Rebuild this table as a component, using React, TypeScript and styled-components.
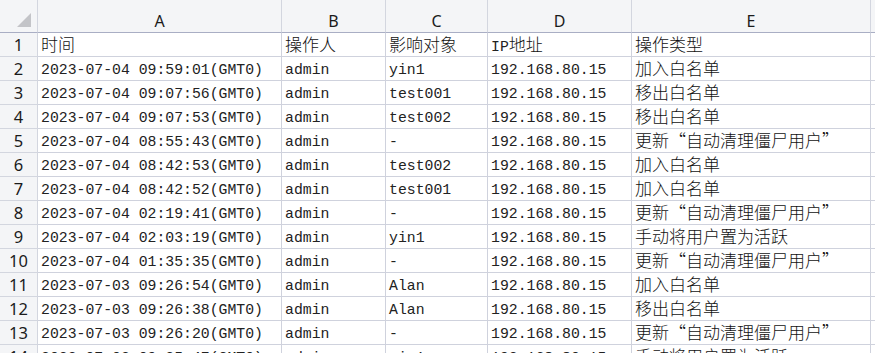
import React from 'react';
import styled, { createGlobalStyle } from 'styled-components';

const GlobalStyle = createGlobalStyle`
  html, body {
    margin: 0;
    padding: 0;
    background: #ffffff;
    overflow: hidden;
  }
`;

const COLS = [38, 244, 104, 102, 144, 239, 40];
const LETTERS = ['A', 'B', 'C', 'D', 'E', ''];

const Sheet = styled.div`
  display: grid;
  grid-template-columns: ${COLS.map((w) => `${w}px`).join(' ')};
  grid-template-rows: 33px;
  grid-auto-rows: 24px;
  width: 875px;
  height: 353px;
  overflow: hidden;
  background: #ffffff;
`;

const Corner = styled.div`
  position: relative;
  background: #f4f5f7;
  border-right: 1px solid #d3d6df;
  border-bottom: 1px solid #a9aec4;
  box-sizing: border-box;

  &::after {
    content: '';
    position: absolute;
    right: 6px;
    bottom: 5px;
    width: 0;
    height: 0;
    border-left: 14px solid transparent;
    border-bottom: 14px solid #c3c4c8;
  }
`;

const ColHeader = styled.div`
  display: flex;
  align-items: center;
  justify-content: center;
  padding-top: 9px;
  box-sizing: border-box;
  background: #f4f5f7;
  border-right: 1px solid #d3d6df;
  border-bottom: 1px solid #a9aec4;
  font-family: 'Noto Sans', 'Liberation Sans', sans-serif;
  font-size: 16px;
  color: #1b1b1b;
`;

const RowHeader = styled.div`
  display: flex;
  align-items: center;
  justify-content: center;
  box-sizing: border-box;
  background: #f4f5f7;
  border-right: 1px solid #d3d6df;
  border-bottom: 1px solid #d3d6df;
  font-family: 'Noto Sans', 'Liberation Sans', sans-serif;
  font-size: 16.5px;
  color: #1b1b1b;
`;

const Cell = styled.div`
  display: flex;
  align-items: center;
  padding: 2px 0 0 3px;
  box-sizing: border-box;
  border-right: 1px solid #cfd2dd;
  border-bottom: 1px solid #cfd2dd;
  white-space: nowrap;
  font-family: 'Liberation Mono', 'Noto Sans CJK SC', monospace;
  font-size: 14.8px;
  color: #222222;
`;

const Line = styled.span`
  line-height: 20px;
`;

const Han = styled.span`
  font-family: 'Noto Sans CJK SC', sans-serif;
  font-size: 17px;
  font-weight: 300;
  color: #111111;
`;

const CJK = /([\u3000-\u9fff\uff00-\uffef\u201c\u201d]+)/;

const CellText: React.FC<{ text: string }> = ({ text }) => (
  <Line>
    {text.split(CJK).map((part, i) =>
      CJK.test(part) ? <Han key={i}>{part}</Han> : <React.Fragment key={i}>{part}</React.Fragment>
    )}
  </Line>
);

const IP = '192.168.80.15';
const UPDATE = '更新“自动清理僵尸用户”';

const rows: string[][] = [
  ['时间', '操作人', '影响对象', 'IP地址', '操作类型'],
  ['2023-07-04 09:59:01(GMT0)', 'admin', 'yin1', IP, '加入白名单'],
  ['2023-07-04 09:07:56(GMT0)', 'admin', 'test001', IP, '移出白名单'],
  ['2023-07-04 09:07:53(GMT0)', 'admin', 'test002', IP, '移出白名单'],
  ['2023-07-04 08:55:43(GMT0)', 'admin', '-', IP, UPDATE],
  ['2023-07-04 08:42:53(GMT0)', 'admin', 'test002', IP, '加入白名单'],
  ['2023-07-04 08:42:52(GMT0)', 'admin', 'test001', IP, '加入白名单'],
  ['2023-07-04 02:19:41(GMT0)', 'admin', '-', IP, UPDATE],
  ['2023-07-04 02:03:19(GMT0)', 'admin', 'yin1', IP, '手动将用户置为活跃'],
  ['2023-07-04 01:35:35(GMT0)', 'admin', '-', IP, UPDATE],
  ['2023-07-03 09:26:54(GMT0)', 'admin', 'Alan', IP, '加入白名单'],
  ['2023-07-03 09:26:38(GMT0)', 'admin', 'Alan', IP, '移出白名单'],
  ['2023-07-03 09:26:20(GMT0)', 'admin', '-', IP, UPDATE],
  ['2023-07-03 09:25:47(GMT0)', 'admin', 'yin1', IP, '手动将用户置为活跃'],
];

const App: React.FC = () => (
  <>
    <GlobalStyle />
    <Sheet>
      <Corner />
      {LETTERS.map((l, i) => (
        <ColHeader key={i}>{l}</ColHeader>
      ))}
      {rows.map((row, r) => (
        <React.Fragment key={r}>
          <RowHeader>{r + 1}</RowHeader>
          {row.map((val, c) => (
            <Cell key={c}>
              <CellText text={val} />
            </Cell>
          ))}
          <Cell />
        </React.Fragment>
      ))}
    </Sheet>
  </>
);

export default App;
